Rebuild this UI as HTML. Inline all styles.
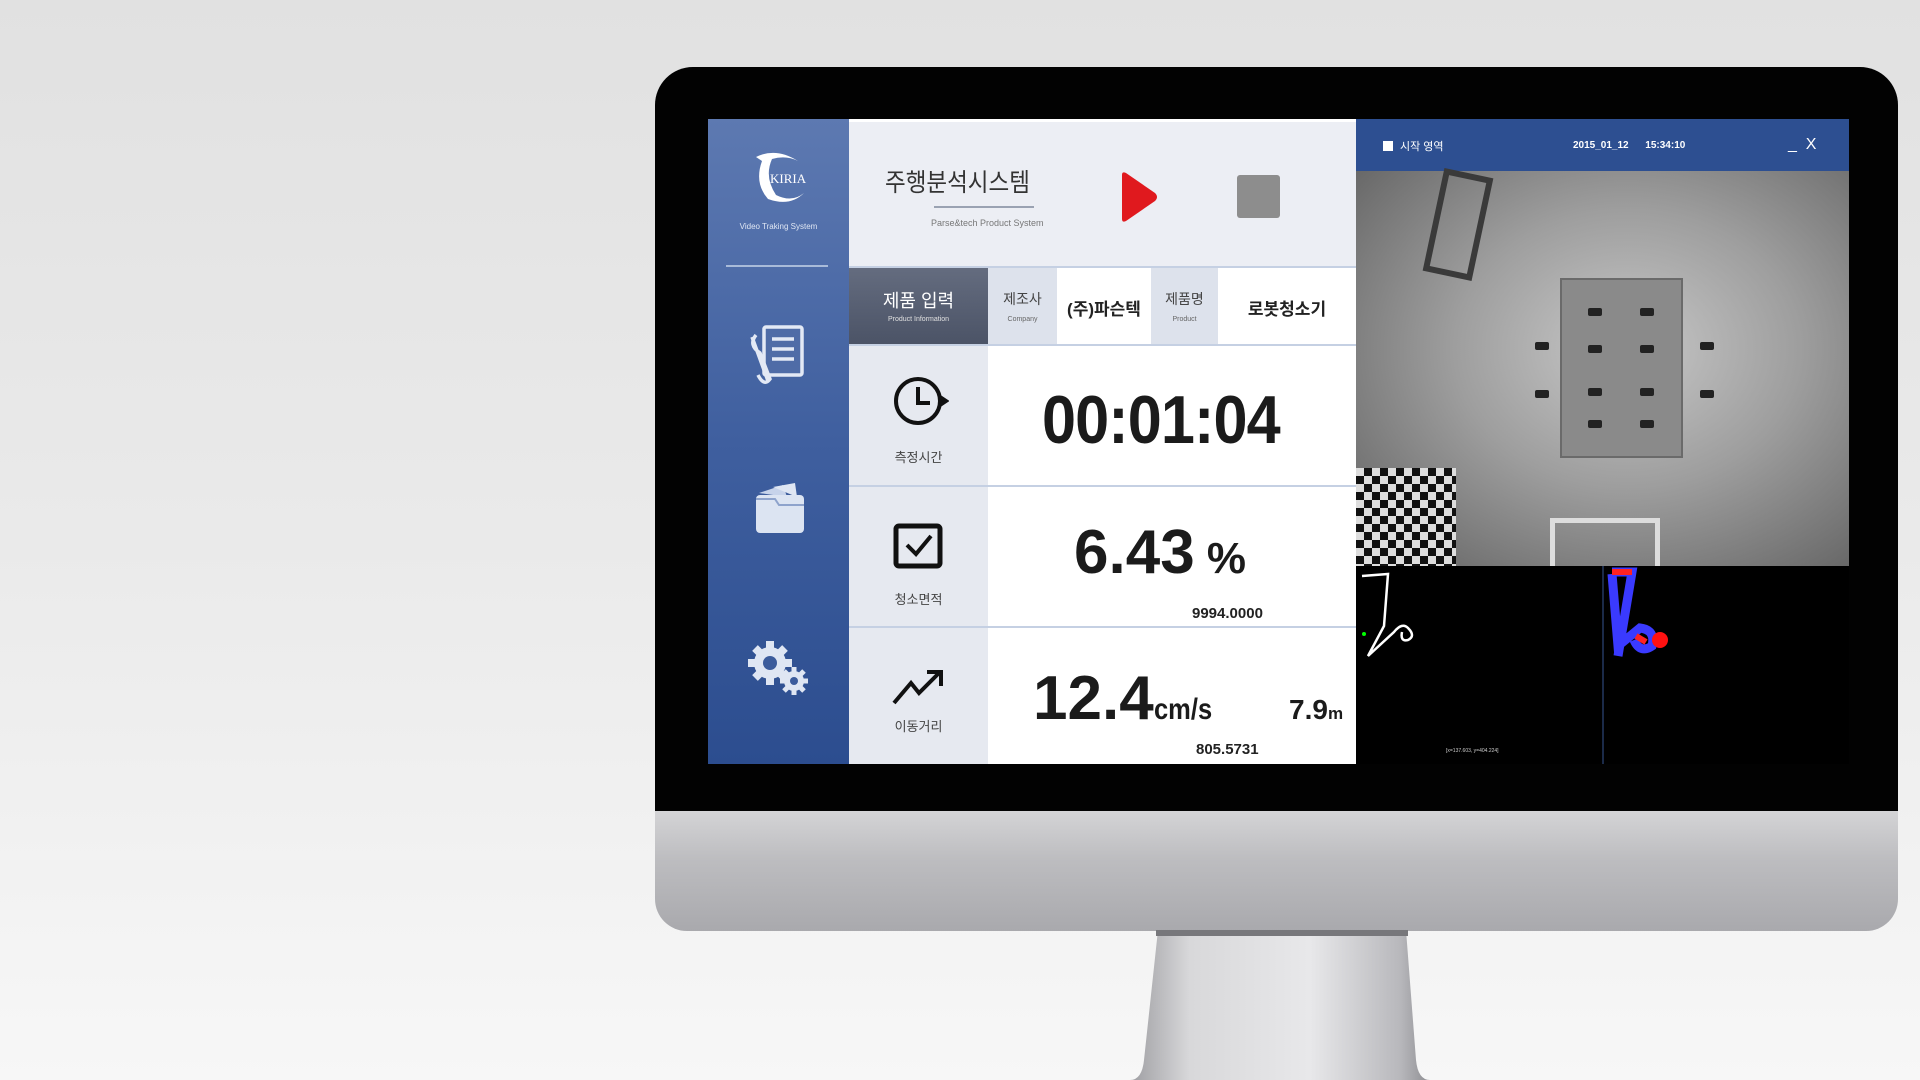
<!DOCTYPE html>
<html><head><meta charset="utf-8"><style>
*{margin:0;padding:0;box-sizing:border-box}
body{width:1920px;height:1080px;overflow:hidden;background:linear-gradient(180deg,#e1e1e1 0%,#eaeaea 50%,#f7f7f7 100%);font-family:"Liberation Sans","Noto Sans CJK KR",sans-serif;position:relative}
.abs{position:absolute}
.bezel{left:655px;top:67px;width:1243px;height:760px;background:#020202;border-radius:38px 38px 0 0}
.chin{left:655px;top:811px;width:1243px;height:120px;background:linear-gradient(180deg,#d4d4d6 0%,#bdbdc0 40%,#a9a9ad 100%);border-radius:0 0 32px 32px}
.side{left:708px;top:119px;width:141px;height:645px;background:linear-gradient(180deg,#5d79b1 0%,#3f5f9f 50%,#2c4d8f 100%)}
.main{left:849px;top:119px;width:507px;height:645px;background:#fff}
.t{position:absolute;text-align:center;white-space:nowrap}
.hl{position:absolute;left:0;width:507px;height:2px;background:#c5d0e3}
.mk{position:absolute;width:14px;height:8px;background:#222;border-radius:2px}
</style></head><body>
<div class="abs bezel"></div>
<div class="abs chin"></div>
<svg class="abs" style="left:1130px;top:930px" width="300" height="150"><defs><linearGradient id="st" x1="0" x2="1"><stop offset="0" stop-color="#9e9ea2"/><stop offset=".2" stop-color="#d8d8da"/><stop offset=".6" stop-color="#e8e8ea"/><stop offset=".9" stop-color="#b8b8bc"/><stop offset="1" stop-color="#8e8e92"/></linearGradient></defs><path d="M28 0 H276 L286 130 Q288 150 300 150 H0 Q12 150 14 130 Z" fill="url(#st)"/><rect x="26" y="0" width="252" height="6" fill="#77777b"/></svg>

<div class="abs side">
 <svg class="abs" style="left:38px;top:28px" width="66" height="60"><path d="M10 10 Q30 0 52 14 Q40 8 26 12 Q18 30 30 48 Q46 56 58 46 Q44 60 22 52 Q8 36 16 14 Z" fill="#fff"/><text x="24" y="36" font-family="Liberation Serif" font-size="13" fill="#fff">KIRIA</text></svg>
 <div class="t" style="left:0;width:141px;top:103px;font-size:8px;color:#dfe6f3">Video Traking System</div>
 <div class="abs" style="left:18px;top:146px;width:102px;height:2px;background:#a9bbd9"></div>
 <svg class="abs" style="left:38px;top:204px" width="64" height="66" fill="none" stroke="#e3e9f5" stroke-width="3.5"><rect x="18" y="4" width="38" height="48" rx="2" fill="#4f6ca7"/><path d="M26 16h22M26 26h22M26 36h22"/><path d="M6 14 L22 58 M10 12 Q2 22 14 30 L24 56 Q18 64 12 52"/></svg>
 <svg class="abs" style="left:45px;top:360px" width="54" height="58"><path d="M6 14 L30 6 L34 18 Z" fill="#c7d3ea"/><path d="M20 8 L42 4 L44 18 Z" fill="#dfe6f3"/><rect x="3" y="16" width="48" height="38" rx="4" fill="#dce4f2"/><path d="M3 20 H22 L26 26 H51" stroke="#8ea3cc" stroke-width="2" fill="none"/></svg>
 <svg class="abs" style="left:38px;top:520px" width="66" height="60" fill="#dfe6f3"><circle cx="24" cy="24" r="16"/><g stroke="#dfe6f3" stroke-width="8"><path d="M24 2v44M2 24h44M9 9l30 30M39 9L9 39"/></g><circle cx="24" cy="24" r="7" fill="#3c5c9c"/><circle cx="48" cy="42" r="10"/><g stroke="#dfe6f3" stroke-width="5"><path d="M48 28v28M34 42h28M38 32l20 20M58 32L38 52"/></g><circle cx="48" cy="42" r="4" fill="#3c5c9c"/></svg>
</div>

<div class="abs main">
 <div class="abs" style="left:0;top:3px;width:507px;height:145px;background:#eceef4"></div>
 <div class="t" style="left:36px;top:44px;font-size:25px;color:#333;transform:scaleX(.9);transform-origin:left">주행분석시스템</div>
 <div class="abs" style="left:85px;top:87px;width:100px;height:2px;background:#9aa2b2"></div>
 <div class="t" style="left:82px;top:99px;font-size:9px;color:#777">Parse&amp;tech Product System</div>
 <svg class="abs" style="left:270px;top:52px" width="40" height="52"><path d="M3 4 Q3 0 7 2 L36 22 Q40 26 36 30 L7 50 Q3 52 3 48 Z" fill="#e0191e"/></svg>
 <div class="abs" style="left:388px;top:56px;width:43px;height:43px;background:#8d8d8d;border-radius:3px"></div>
 <div class="hl" style="top:147px"></div>
 <div class="abs" style="left:0;top:149px;width:139px;height:77px;background:linear-gradient(180deg,#646c7f,#4b5366)"></div>
 <div class="t" style="left:0;width:139px;top:168px;font-size:18px;color:#fff">제품 입력</div>
 <div class="t" style="left:0;width:139px;top:197px;font-size:7px;color:#e0e0e0">Product Information</div>
 <div class="abs" style="left:139px;top:149px;width:69px;height:77px;background:#dde2ec"></div>
 <div class="t" style="left:139px;width:69px;top:170px;font-size:14px;color:#444">제조사</div>
 <div class="t" style="left:139px;width:69px;top:197px;font-size:7px;color:#666">Company</div>
 <div class="t" style="left:208px;width:94px;top:176px;font-size:17px;font-weight:bold;color:#222">(주)파슨텍</div>
 <div class="abs" style="left:302px;top:149px;width:67px;height:77px;background:#dde2ec"></div>
 <div class="t" style="left:302px;width:67px;top:170px;font-size:14px;color:#444">제품명</div>
 <div class="t" style="left:302px;width:67px;top:197px;font-size:7px;color:#666">Product</div>
 <div class="t" style="left:369px;width:138px;top:176px;font-size:17px;font-weight:bold;color:#222">로봇청소기</div>
 <div class="hl" style="top:225px"></div>
 <div class="abs" style="left:0;top:227px;width:139px;height:418px;background:#e6e9f0"></div>
 <div class="hl" style="top:366px"></div>
 <div class="hl" style="top:507px"></div>
 <svg class="abs" style="left:42px;top:254px" width="58" height="56" fill="none" stroke="#111" stroke-width="4"><circle cx="27" cy="28" r="22"/><path d="M27 14v16h12"/><path d="M49 24 l6 4 -6 4" fill="#111"/></svg>
 <div class="t" style="left:0;width:139px;top:328px;font-size:13px;color:#444">측정시간</div>
 <div class="t" style="left:193px;top:262px;font-size:68px;font-weight:bold;color:#1b1b1b;letter-spacing:-1px;transform:scaleX(.9);transform-origin:left">00:01:04</div>
 <svg class="abs" style="left:44px;top:404px" width="52" height="48" fill="none" stroke="#111"><rect x="3" y="3" width="44" height="40" rx="3" stroke-width="5"/><path d="M14 22 l9 9 15-18" stroke-width="4"/></svg>
 <div class="t" style="left:0;width:139px;top:470px;font-size:13px;color:#444">청소면적</div>
 <div class="t" style="left:225px;top:398px;font-size:62px;font-weight:bold;color:#1b1b1b">6.43<span style="font-size:44px"> %</span></div>
 <div class="t" style="left:343px;top:486px;font-size:15px;font-weight:bold;color:#222">9994.0000</div>
 <svg class="abs" style="left:42px;top:548px" width="56" height="40" fill="none" stroke="#111" stroke-width="4"><path d="M3 36 L20 16 L28 26 L48 6"/><path d="M36 5 h14 v14" stroke-width="4"/></svg>
 <div class="t" style="left:0;width:139px;top:597px;font-size:13px;color:#444">이동거리</div>
 <div class="t" style="left:184px;top:544px;font-size:62px;font-weight:bold;color:#1b1b1b">12.4<span style="font-size:30px;display:inline-block;transform:scaleX(.85);transform-origin:left">cm/s</span></div>
 <div class="t" style="left:440px;top:575px;font-size:28px;font-weight:bold;color:#1b1b1b">7.9<span style="font-size:17px">m</span></div>
 <div class="t" style="left:347px;top:622px;font-size:15px;font-weight:bold;color:#222">805.5731</div>
</div>

<div class="abs" style="left:1356px;top:119px;width:493px;height:52px;background:#2d4f91"></div>
<div class="abs" style="left:1383px;top:141px;width:10px;height:10px;background:#fff"></div>
<div class="t" style="left:1400px;top:138px;font-size:11px;color:#fff">시작 영역</div>
<div class="t" style="left:1573px;top:140px;font-size:10px;font-weight:bold;color:#fff">2015_01_12 &nbsp;&nbsp;&nbsp;&nbsp;&nbsp;15:34:10</div>
<div class="t" style="left:1788px;top:136px;font-size:16px;color:#fff">_ &nbsp;X</div>
<div class="abs" style="left:1356px;top:171px;width:493px;height:395px;background:radial-gradient(ellipse at 55% 45%,#c8c8c8 0%,#9e9e9e 45%,#5e5e5e 100%)"></div>
<div class="abs" style="left:1560px;top:278px;width:123px;height:180px;background:#8a8a8a;border:2px solid #6a6a6a"></div>
<div class="mk" style="left:1588px;top:308px"></div><div class="mk" style="left:1640px;top:308px"></div>
<div class="mk" style="left:1588px;top:345px"></div><div class="mk" style="left:1640px;top:345px"></div>
<div class="mk" style="left:1588px;top:388px"></div><div class="mk" style="left:1640px;top:388px"></div>
<div class="mk" style="left:1588px;top:420px"></div><div class="mk" style="left:1640px;top:420px"></div>
<div class="mk" style="left:1535px;top:342px"></div><div class="mk" style="left:1700px;top:342px"></div>
<div class="mk" style="left:1535px;top:390px"></div><div class="mk" style="left:1700px;top:390px"></div>
<div class="abs" style="left:1433px;top:172px;width:50px;height:105px;border:6px solid #3a3a3a;transform:rotate(12deg)"></div>
<div class="abs" style="left:1356px;top:468px;width:100px;height:98px;background:repeating-conic-gradient(#111 0 25%,#ddd 0 50%) 0 0/16px 16px"></div>
<div class="abs" style="left:1550px;top:518px;width:110px;height:48px;border:5px solid #ddd;border-bottom:none"></div>
<div class="abs" style="left:1356px;top:566px;width:493px;height:198px;background:#000"></div>
<div class="abs" style="left:1602px;top:566px;width:2px;height:198px;background:#1b2a48"></div>
<svg class="abs" style="left:1356px;top:566px" width="493" height="198" fill="none"><path d="M6 10 L32 8 L28 60 L12 90 L38 66 Q46 56 52 62 Q60 70 52 74 Q44 76 46 66" stroke="#fff" stroke-width="2.5"/><circle cx="8" cy="68" r="2" fill="#0f0"/><path d="M256 6 L276 6 L262 90 M256 8 L262 80 L284 62 Q300 64 296 80 Q284 88 278 74" stroke="#3a3aff" stroke-width="9"/><path d="M256 6 L276 6 M280 70 l10 6" stroke="#f22" stroke-width="6"/><circle cx="304" cy="74" r="8" fill="#f11"/><text x="90" y="186" font-size="5" fill="#ccc">[x=137.603, y=404.224]</text></svg>
</body></html>
